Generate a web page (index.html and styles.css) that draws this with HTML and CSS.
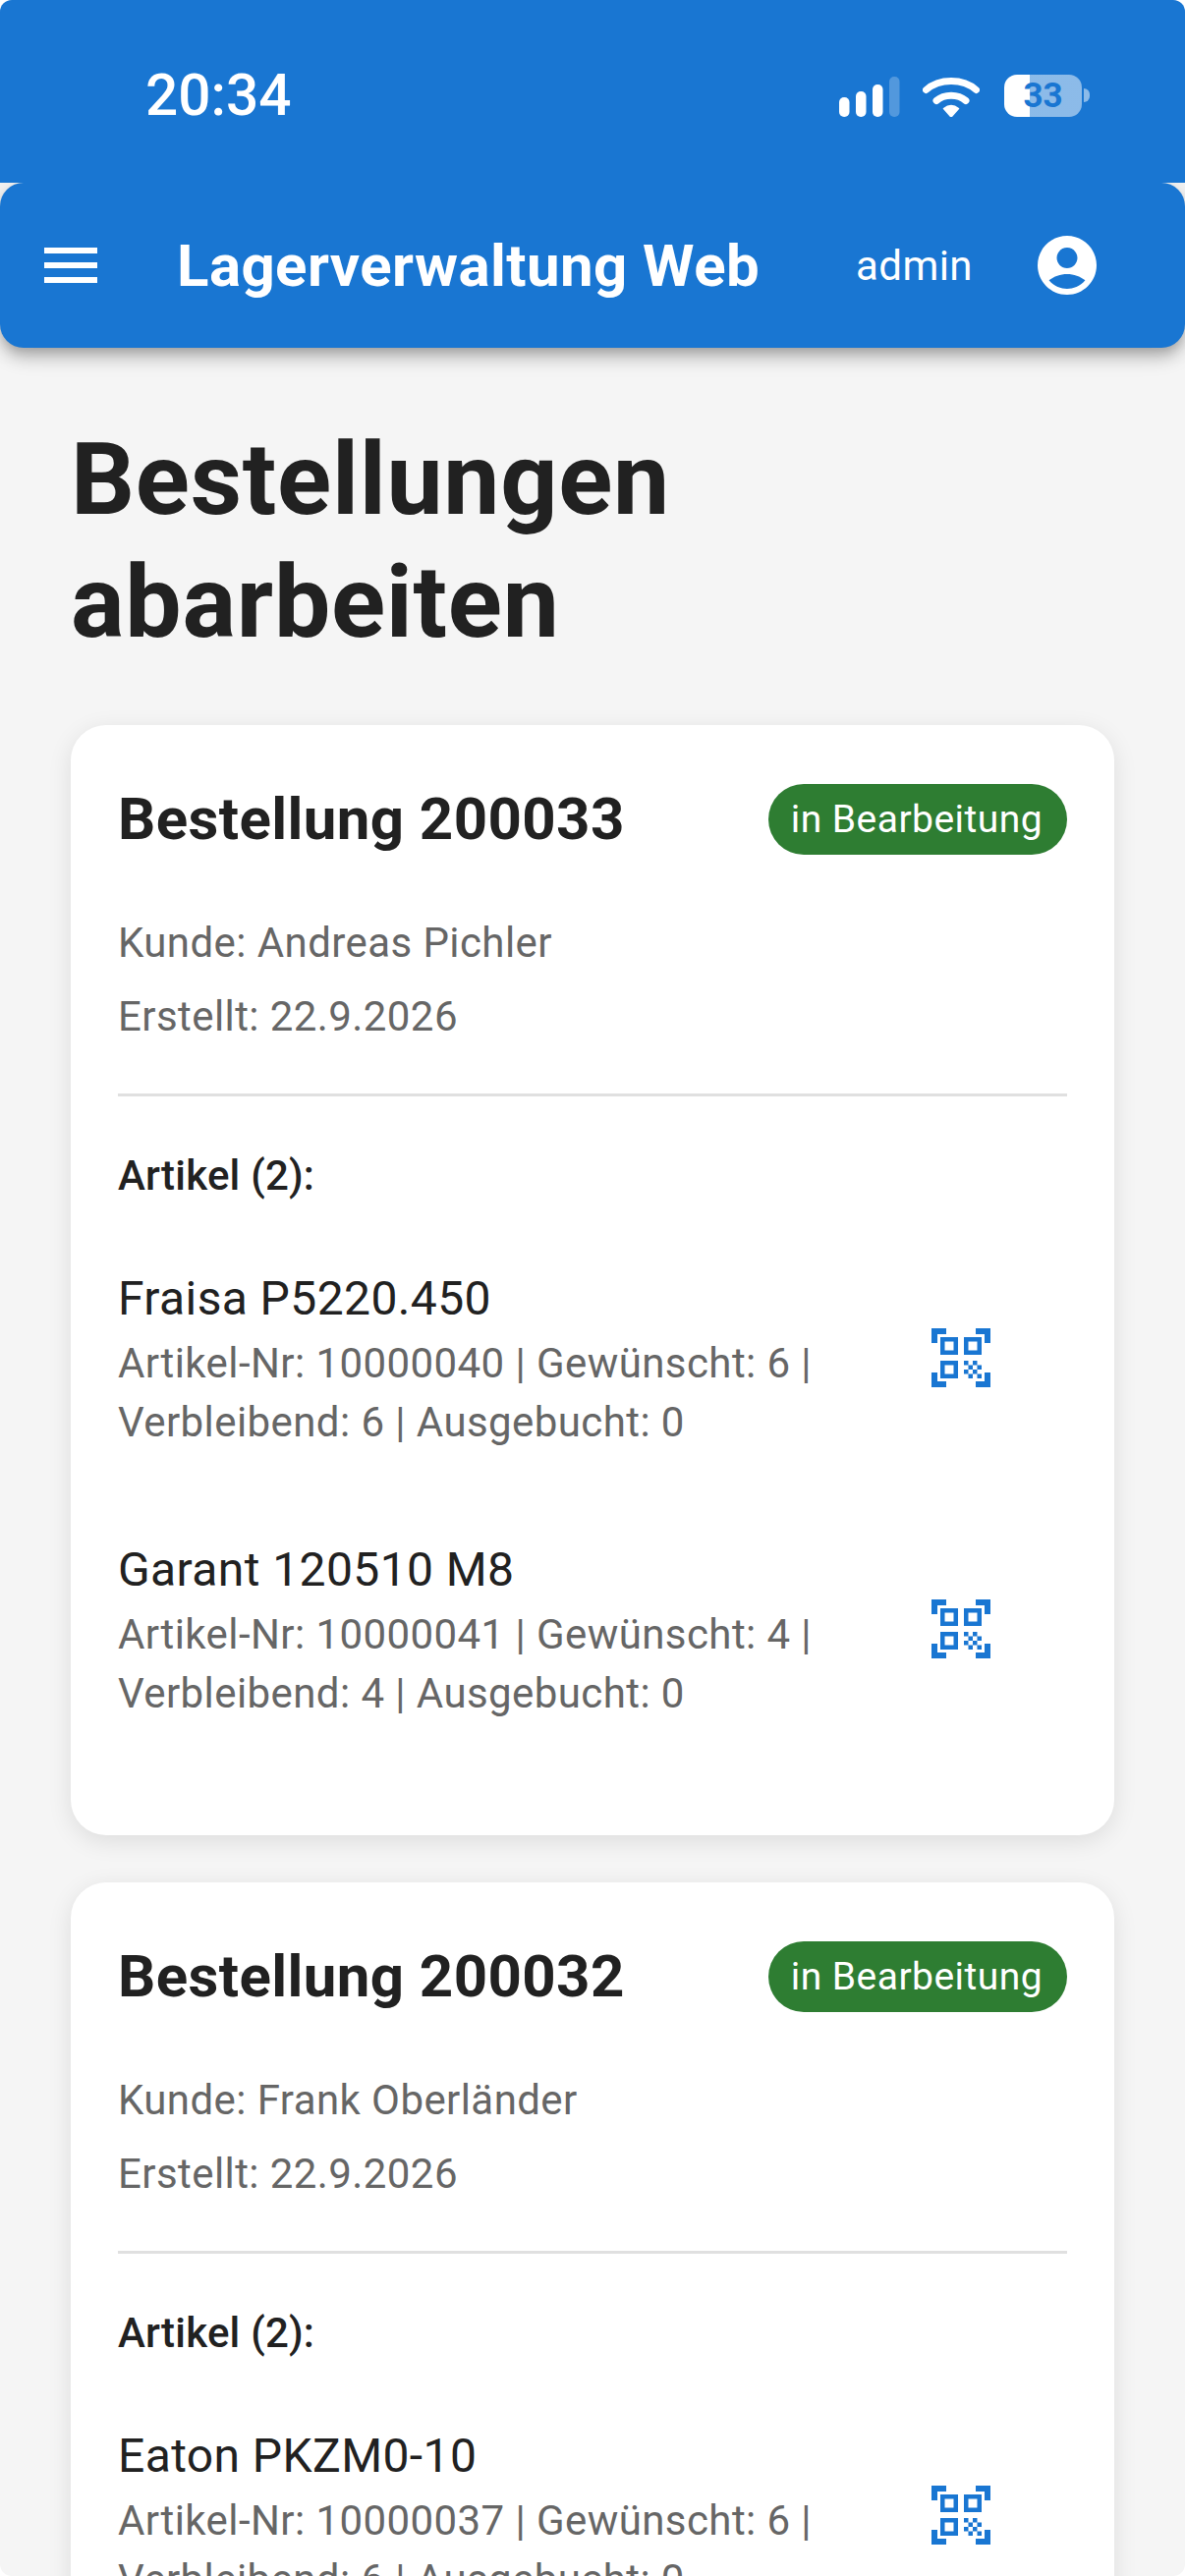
FILE: index.html
```html
<!DOCTYPE html>
<html lang="de">
<head>
<meta charset="utf-8">
<title>Lagerverwaltung Web</title>
<link rel="stylesheet" href="styles.css">
</head>
<body>

<div class="statusbar">
  <span class="time">20:34</span>
  <div class="status-icons">
    <svg class="signal" width="62" height="41" viewBox="0 0 62 41">
      <rect x="0" y="21" width="10.5" height="20" rx="5" fill="#fff"/>
      <rect x="17" y="15" width="10.5" height="26" rx="5" fill="#fff"/>
      <rect x="34" y="8" width="10.5" height="33" rx="5" fill="#fff"/>
      <rect x="51" y="0" width="10.5" height="41" rx="5" fill="#fff" fill-opacity=".25"/>
    </svg>
    <svg class="wifi" width="58" height="43" viewBox="0 0 58 43">
      <path d="M3.5 15.5C17 3.5 41 3.5 54.5 15.5" fill="none" stroke="#fff" stroke-width="7" stroke-linecap="round"/>
      <path d="M14 26.5C22 19.5 36 19.5 44 26.5" fill="none" stroke="#fff" stroke-width="7" stroke-linecap="round"/>
      <path d="M21.5 34.5Q29 28.5 36.500 34.500L29 43Z" fill="#fff" stroke="#fff" stroke-width="1.500" stroke-linejoin="round"/>
    </svg>
    <div class="battery"><span>33</span></div>
    <div class="battery-cap"></div>
  </div>
</div>

<header class="appbar">
  <svg class="icon menu-icon" viewBox="0 0 24 24"><path d="M3 18h18v-2H3v2zm0-5h18v-2H3v2zm0-7v2h18V6H3z"/></svg>
  <div class="appbar-title">Lagerverwaltung Web</div>
  <div class="appbar-user">admin</div>
  <svg class="icon user-icon" viewBox="0 0 24 24"><path d="M12 2C6.48 2 2 6.48 2 12s4.48 10 10 10 10-4.48 10-10S17.52 2 12 2zm0 4c1.93 0 3.5 1.57 3.5 3.5S13.93 13 12 13s-3.5-1.57-3.5-3.500S10.070 6 12 6zm0 14c-2.030 0-4.430-.82-6.140-2.880C7.550 15.800 9.680 15 12 15s4.450.8 6.140 2.120C16.430 19.180 14.030 20 12 20z"/></svg>
</header>

<main class="content">
  <h1 class="page-title">Bestellungen abarbeiten</h1>

  <section class="card">
    <div class="card-head">
      <h2 class="order-no">Bestellung 200033</h2>
      <span class="chip">in Bearbeitung</span>
    </div>
    <p class="meta">Kunde: Andreas Pichler</p>
    <p class="meta">Erstellt: 22.9.2026</p>
    <hr class="divider">
    <h3 class="items-title">Artikel (2):</h3>
    <div class="item">
      <div class="item-text">
        <div class="item-name">Fraisa P5220.450</div>
        <div class="item-info">Artikel-Nr: 10000040 | Gewünscht: 6 | Verbleibend: 6 | Ausgebucht: 0</div>
      </div>
      <svg class="icon qr-icon" viewBox="0 0 24 24"><path d="M9.5 6.5v3h-3v-3h3M11 5H5v6h6V5zm-1.5 9.5v3h-3v-3h3M11 13H5v6h6v-6zm6.500-6.500v3h-3v-3h3M19 5h-6v6h6V5zm-6 8h1.500v1.500H13V13zm1.500 1.500H16V16h-1.500v-1.500zM16 13h1.500v1.500H16V13zm-3 3h1.500v1.500H13V16zm1.500 1.500H16V19h-1.500v-1.500zM16 16h1.500v1.500H16V16zm1.500-1.500H19V16h-1.500v-1.500zm0 3H19V19h-1.500v-1.500zM22 7h-2V4h-3V2h5v5zm0 15v-5h-2v3h-3v2h5zM2 22h5v-2H4v-3H2v5zM2 2v5h2V4h3V2H2z"/></svg>
    </div>
    <div class="item">
      <div class="item-text">
        <div class="item-name">Garant 120510 M8</div>
        <div class="item-info">Artikel-Nr: 10000041 | Gewünscht: 4 | Verbleibend: 4 | Ausgebucht: 0</div>
      </div>
      <svg class="icon qr-icon" viewBox="0 0 24 24"><path d="M9.5 6.5v3h-3v-3h3M11 5H5v6h6V5zm-1.5 9.5v3h-3v-3h3M11 13H5v6h6v-6zm6.500-6.500v3h-3v-3h3M19 5h-6v6h6V5zm-6 8h1.500v1.500H13V13zm1.500 1.500H16V16h-1.500v-1.500zM16 13h1.500v1.500H16V13zm-3 3h1.500v1.500H13V16zm1.500 1.500H16V19h-1.500v-1.500zM16 16h1.500v1.500H16V16zm1.500-1.500H19V16h-1.500v-1.500zm0 3H19V19h-1.500v-1.500zM22 7h-2V4h-3V2h5v5zm0 15v-5h-2v3h-3v2h5zM2 22h5v-2H4v-3H2v5zM2 2v5h2V4h3V2H2z"/></svg>
    </div>
  </section>

  <section class="card">
    <div class="card-head">
      <h2 class="order-no">Bestellung 200032</h2>
      <span class="chip">in Bearbeitung</span>
    </div>
    <p class="meta">Kunde: Frank Oberländer</p>
    <p class="meta">Erstellt: 22.9.2026</p>
    <hr class="divider">
    <h3 class="items-title">Artikel (2):</h3>
    <div class="item">
      <div class="item-text">
        <div class="item-name">Eaton PKZM0-10</div>
        <div class="item-info">Artikel-Nr: 10000037 | Gewünscht: 6 | Verbleibend: 6 | Ausgebucht: 0</div>
      </div>
      <svg class="icon qr-icon" viewBox="0 0 24 24"><path d="M9.5 6.5v3h-3v-3h3M11 5H5v6h6V5zm-1.5 9.5v3h-3v-3h3M11 13H5v6h6v-6zm6.500-6.500v3h-3v-3h3M19 5h-6v6h6V5zm-6 8h1.500v1.500H13V13zm1.500 1.500H16V16h-1.500v-1.500zM16 13h1.500v1.500H16V13zm-3 3h1.500v1.500H13V16zm1.500 1.500H16V19h-1.500v-1.500zM16 16h1.500v1.500H16V16zm1.500-1.500H19V16h-1.500v-1.500zm0 3H19V19h-1.500v-1.500zM22 7h-2V4h-3V2h5v5zm0 15v-5h-2v3h-3v2h5zM2 22h5v-2H4v-3H2v5zM2 2v5h2V4h3V2H2z"/></svg>
    </div>
  </section>
</main>

</body>
</html>
```

FILE: styles.css
```css
html {
  background-color: #fff;
  height: 2622px;
  overflow: hidden;
}

body {
  margin: 0;
  height: 2622px;
  overflow: hidden;
  border-radius: 12px;
  background-color: #f5f5f5;
  font-family: Roboto, "Liberation Sans", sans-serif;
  color: #212121;
}

.icon {
  width: 72px;
  height: 72px;
  flex: none;
  fill: #fff;
}

/* status bar */
.statusbar {
  position: relative;
  z-index: 1;
  height: 186px;
  background-color: #1976d2;
  display: flex;
  align-items: flex-start;
  justify-content: space-between;
  padding: 0 97px 0 148px;
  box-sizing: border-box;
  color: #fff;
}

.time {
  font-size: 58.5px;
  font-weight: 500;
  line-height: 66px;
  margin-top: 64px;
}

.status-icons {
  display: flex;
  align-items: flex-start;
  margin-top: 76px;
}

.signal {
  margin-top: 2px;
}

.wifi {
  margin-left: 23px;
}

.battery {
  width: 79px;
  height: 43px;
  margin-left: 25px;
  border-radius: 13px;
  background: linear-gradient(to right, #fff 26px, rgba(255,255,255,.5) 26px);
  color: #1976d2;
  font-size: 35px;
  font-weight: 700;
  line-height: 43px;
  text-align: center;
}

.battery-cap {
  width: 6px;
  height: 14px;
  margin: 14px 0 0 2px;
  border-radius: 0 7px 7px 0;
  background-color: rgba(255,255,255,.5);
}

/* app bar */
.appbar {
  height: 168px;
  background-color: #1976d2;
  color: #fff;
  border-radius: 24px;
  display: flex;
  align-items: center;
  padding: 0 84px 0 36px;
  box-shadow: 0 6px 12px -3px rgba(0,0,0,.2), 0 12px 15px rgba(0,0,0,.14), 0 3px 30px rgba(0,0,0,.12);
}

.appbar-title {
  flex: 1;
  font-size: 60px;
  font-weight: 700;
  letter-spacing: .42px;
  margin-left: 72px;
}

.appbar-user {
  font-size: 42px;
  letter-spacing: .45px;
  margin-right: 60px;
}

/* page */
.content {
  padding: 72px 72px 0;
}

.page-title {
  margin: 0 0 62px;
  font-size: 102px;
  font-weight: 700;
  letter-spacing: .75px;
  line-height: 125px;
  width: 800px;
}

.card {
  background-color: #fff;
  border-radius: 36px;
  padding: 48px 48px 72px;
  margin-bottom: 48px;
  box-shadow: 0 6px 24px rgba(0,0,0,.1);
}

.card-head {
  display: flex;
  align-items: center;
  justify-content: space-between;
  margin-bottom: 48px;
}

.order-no {
  margin: 0;
  font-size: 60px;
  font-weight: 700;
  letter-spacing: .4px;
  line-height: 96px;
}

.chip {
  height: 72px;
  line-height: 72px;
  padding: 0 25px 0 23px;
  border-radius: 36px;
  background-color: #2e7d32;
  color: #fff;
  font-size: 39px;
  letter-spacing: .45px;
}

.meta {
  margin: 0 0 15px;
  font-size: 42px;
  letter-spacing: .42px;
  line-height: 60px;
  color: #666;
}

.divider {
  margin: 48px 0;
  border: 0;
  border-top: 3px solid #e0e0e0;
}

.items-title {
  margin: 0 0 14px;
  font-size: 42px;
  font-weight: 500;
  letter-spacing: .2px;
  line-height: 66px;
}

.item {
  display: flex;
  align-items: center;
  padding: 42px 72px 42px 0;
}

.item-text {
  flex: 1;
  padding-right: 24px;
}

.item-name {
  font-size: 48px;
  letter-spacing: .4px;
  line-height: 72px;
}

.item-info {
  font-size: 42px;
  letter-spacing: .42px;
  line-height: 60px;
  color: #666;
}

.qr-icon {
  fill: #1976d2;
}
```
